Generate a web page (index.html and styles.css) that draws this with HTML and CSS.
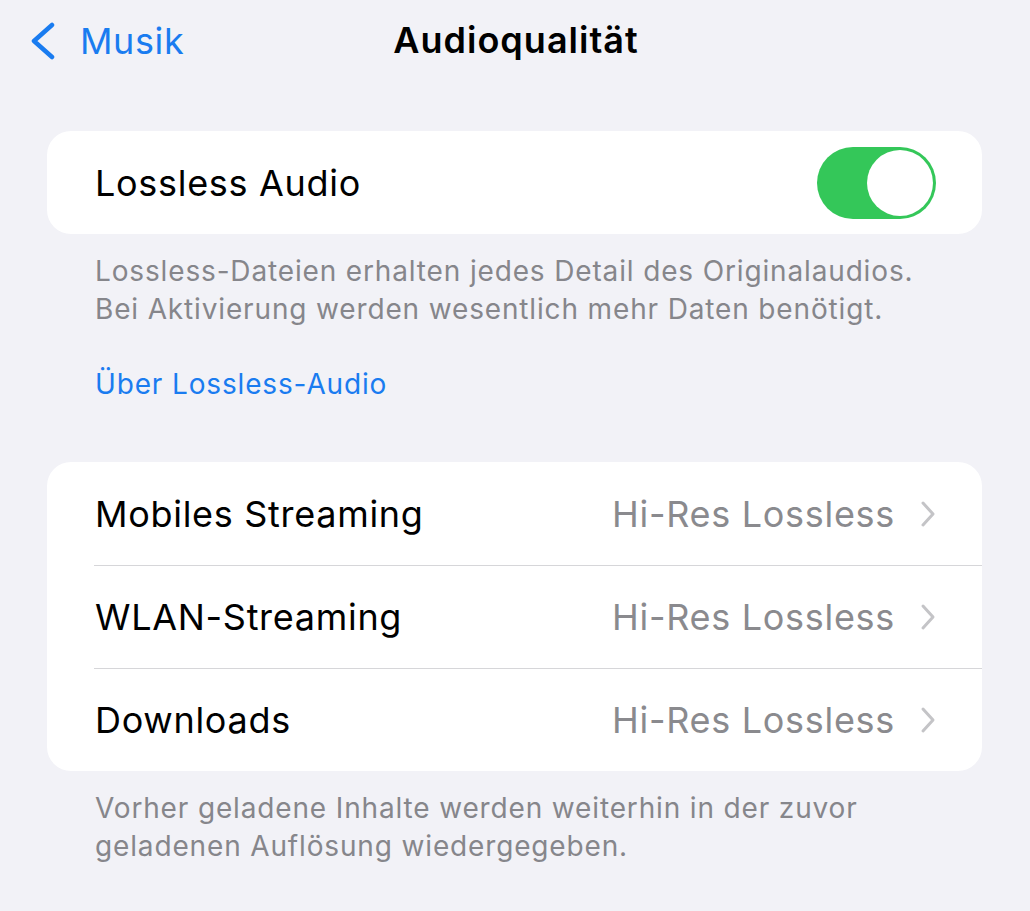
FILE: index.html
```html
<!DOCTYPE html>
<html lang="de">
<head>
    <meta charset="UTF-8">
    <title>Audioqualität</title>
    <link rel="stylesheet" href="styles.css">
</head>
<body>
    <!-- Navigationsleiste -->
    <header class="nav">
        <a class="nav-back" href="#">
            <svg class="nav-chevron" viewBox="0 0 28 38" width="28" height="38">
                <path d="M24 3 L6 19 L24 35" fill="none" stroke="currentColor" stroke-width="4.5" stroke-linecap="round" stroke-linejoin="round"/>
            </svg>
            <span>Musik</span>
        </a>
        <h1 class="nav-title">Audioqualität</h1>
    </header>

    <main class="content">
        <section class="group">
            <div class="row">
                <span class="row-label">Lossless Audio</span>
                <span class="switch on"><span class="knob"></span></span>
            </div>
        </section>
        <p class="footnote">Lossless-Dateien erhalten jedes Detail des Originalaudios. Bei Aktivierung werden wesentlich mehr Daten benötigt.</p>
        <a class="footnote-link" href="#">Über Lossless-Audio</a>

        <section class="group list">
            <div class="row">
                <span class="row-label">Mobiles Streaming</span>
                <span class="row-value">Hi-Res Lossless</span>
                <svg class="row-chevron" viewBox="0 0 16 28" width="16" height="28"><path d="M3 3 L13 14 L3 25" fill="none" stroke="currentColor" stroke-width="3" stroke-linecap="round" stroke-linejoin="round"/></svg>
            </div>
            <div class="row">
                <span class="row-label">WLAN-Streaming</span>
                <span class="row-value">Hi-Res Lossless</span>
                <svg class="row-chevron" viewBox="0 0 16 28" width="16" height="28"><path d="M3 3 L13 14 L3 25" fill="none" stroke="currentColor" stroke-width="3" stroke-linecap="round" stroke-linejoin="round"/></svg>
            </div>
            <div class="row">
                <span class="row-label">Downloads</span>
                <span class="row-value">Hi-Res Lossless</span>
                <svg class="row-chevron" viewBox="0 0 16 28" width="16" height="28"><path d="M3 3 L13 14 L3 25" fill="none" stroke="currentColor" stroke-width="3" stroke-linecap="round" stroke-linejoin="round"/></svg>
            </div>
        </section>
        <p class="footnote">Vorher geladene Inhalte werden weiterhin in der zuvor geladenen Auflösung wiedergegeben.</p>
    </main>
</body>
</html>
```

FILE: styles.css
```css
body { margin: 0; background: #f2f2f7; font-family: Inter, "Liberation Sans", sans-serif; color: #000; }
a { text-decoration: none; }

/* Navigationsleiste */
.nav { position: relative; height: 80px; display: flex; align-items: center; justify-content: center; }
.nav-back { position: absolute; left: 28px; top: 19px; display: flex; align-items: center; gap: 24px; color: #1a7cf0; font-size: 36px; letter-spacing: 0.6px; }
.nav-chevron { display: block; }
.nav-title { margin: 0 0 0 2px; font-size: 36px; font-weight: 600; letter-spacing: 1px; }

/* Gruppen */
.content { padding: 51px 48px 0 47px; }
.group { background: #fff; border-radius: 24px; }
.row { display: flex; align-items: center; height: 103px; padding: 0 46px 0 48px; font-size: 36px; letter-spacing: 0.7px; }
.list .row { position: relative; }
.list .row + .row::before { content: ""; position: absolute; left: 47px; right: 0; top: 0; border-top: 1px solid #d6d6d9; }
.row-label { flex: 1; }
.row-value { color: #8a8a8e; margin-right: 25px; }
.row-chevron { color: #c4c4c7; }

/* Schalter */
.switch { width: 119px; height: 72px; border-radius: 36px; background: #34c759; position: relative; }
.knob { position: absolute; right: 3px; top: 3px; width: 66px; height: 66px; border-radius: 50%; background: #fff; }

.footnote { margin: 0; padding: 18px 60px 0 48px; font-size: 28px; line-height: 38px; color: #86868b; letter-spacing: 0.85px; }
.footnote-link { display: block; padding: 37px 48px 59px; font-size: 28px; line-height: 38px; color: #1a7cf0; letter-spacing: 0.85px; }
```
